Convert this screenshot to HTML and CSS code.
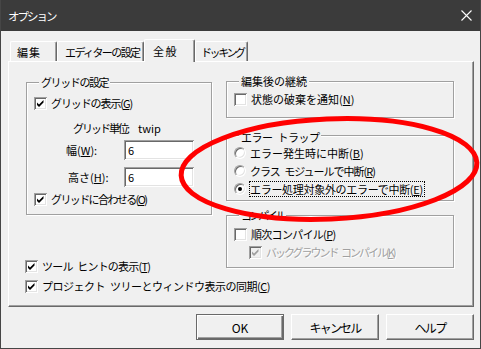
FILE: index.html
```html
<!DOCTYPE html>
<html lang="ja">
<head>
<meta charset="utf-8">
<link rel="stylesheet" href="styles.css">
</head>
<body>
<div class="window">
  <div class="titlebar">
    <span class="title">オプション</span>
    <svg class="close" width="11" height="11" viewBox="0 0 11 11"><path d="M0.5 0.5 L10.5 10.5 M10.5 0.5 L0.5 10.5" stroke="#fff" stroke-width="1.1" fill="none"/></svg>
  </div>
  <div class="tabs">
    <div class="tab t1">編集</div>
    <div class="tab t2">エディターの設定</div>
    <div class="tab t3 sel">全般</div>
    <div class="tab t4">ドッキング</div>
  </div>
  <div class="panel">
    <div class="col-left">
      <div class="grp grp-grid">
        <div class="grp-title ls-14">グリッドの設定</div>
        <div class="chk row-show"><span class="box"><svg viewBox="0 0 13 13"><polygon points="3,5.5 5,7.5 9.5,3 9.5,5.5 5,10 3,8"/></svg></span><span class="ls-11">グリッドの表示(<u>G</u>)</span></div>
        <div class="unit"><span><span class="ls-20">グリッド単位</span>:</span><span class="twip">twip</span></div>
        <div class="field f-w"><span class="lbl">幅(<u>W</u>):</span><span class="input">6</span></div>
        <div class="field f-h"><span class="lbl">高さ(<u>H</u>):</span><span class="input">6</span></div>
        <div class="chk row-snap"><span class="box"><svg viewBox="0 0 13 13"><polygon points="3,5.5 5,7.5 9.5,3 9.5,5.5 5,10 3,8"/></svg></span><span class="ls-16">グリッドに合わせる(<u>O</u>)</span></div>
      </div>
      <div class="chk row-tips"><span class="box"><svg viewBox="0 0 13 13"><polygon points="3,5.5 5,7.5 9.5,3 9.5,5.5 5,10 3,8"/></svg></span><span class="ls-08 ws">ツール ヒントの表示(<u>T</u>)</span></div>
      <div class="chk row-sync"><span class="box"><svg viewBox="0 0 13 13"><polygon points="3,5.5 5,7.5 9.5,3 9.5,5.5 5,10 3,8"/></svg></span><span class="ls-05 ws">プロジェクト ツリーとウィンドウ表示の同期(<u>C</u>)</span></div>
    </div>
    <div class="col-right">
      <div class="grp grp-edit">
        <div class="grp-title">編集後の継続</div>
        <div class="chk row-notify"><span class="box"></span><span>状態の破棄を通知(<u>N</u>)</span></div>
      </div>
      <div class="grp grp-trap">
        <div class="grp-title ls-05 ws">エラー トラップ</div>
        <div class="radio"><span class="dot"></span><span class="rlbl">エラー発生時に中断(<u>B</u>)</span></div>
        <div class="radio"><span class="dot"></span><span class="rlbl ls-10 ws">クラス モジュールで中断(<u>R</u>)</span></div>
        <div class="radio on"><span class="dot"></span><span class="rlbl focus ls-03">エラー処理対象外のエラーで中断(<u>E</u>)</span></div>
      </div>
      <div class="grp grp-compile">
        <div class="grp-title ls-24">コンパイル</div>
        <div class="chk row-demand"><span class="box"></span><span class="ls-07">順次コンパイル(<u>P</u>)</span></div>
        <div class="chk row-bg disabled"><span class="box"><svg viewBox="0 0 13 13"><polygon points="3,5.5 5,7.5 9.5,3 9.5,5.5 5,10 3,8"/></svg></span><span class="ls-20 ws">バックグラウンド コンパイル(<u>K</u>)</span></div>
      </div>
    </div>
  </div>
  <div class="buttons">
    <div class="btn default">OK</div>
    <div class="btn ls-18">キャンセル</div>
    <div class="btn ls-17">ヘルプ</div>
  </div>
  <svg class="mark" width="481" height="349" viewBox="0 0 481 349"><ellipse cx="329" cy="169" rx="148" ry="50" transform="rotate(-2.5 329 169)" fill="none" stroke="#ff0000" stroke-width="5"/></svg>
</div>
</body>
</html>
```

FILE: styles.css
```css
html, body {
  margin: 0;
  padding: 0;
  background: #f0f0f0;
}
body {
  font-family: "Noto Sans CJK JP", "Noto Sans", sans-serif;
  font-size: 11px;
  color: #000;
}
u { text-decoration: underline; text-underline-offset: 1px; }

.ls-03 { letter-spacing: -0.3px; }
.ls-05 { letter-spacing: -0.5px; }
.ls-07 { letter-spacing: -0.7px; }
.ls-08 { letter-spacing: -0.8px; }
.ls-10 { letter-spacing: -1px; }
.ls-11 { letter-spacing: -1.1px; }
.ls-14 { letter-spacing: -1.4px; }
.ls-16 { letter-spacing: -1.6px; }
.ls-17 { letter-spacing: -1.7px; }
.ls-18 { letter-spacing: -1.8px; }
.ls-20 { letter-spacing: -2px; }
.ls-24 { letter-spacing: -2.4px; }
.ws { word-spacing: 3px; }

.window {
  position: relative;
  width: 481px;
  height: 349px;
  box-sizing: border-box;
  border: 1px solid #464646;
  border-top: none;
  background: #f0f0f0;
  overflow: hidden;
}

.titlebar {
  height: 31px;
  background: #3b3b3b;
  display: flex;
  align-items: center;
  justify-content: space-between;
  padding: 0 9px 0 8px;
  margin: 0 -1px;
}
.title {
  color: #fff;
  font-size: 11.5px;
  line-height: 14px;
  letter-spacing: -2px;
}
.close { display: block; }

/* tabs */
.tabs {
  display: flex;
  align-items: flex-end;
  height: 22px;
  margin-top: 8px;
  padding-left: 9px;
}
.tab {
  box-sizing: border-box;
  height: 20px;
  display: flex;
  align-items: center;
  padding-left: 6px;
  background: #f0f0f0;
  border-top: 1px solid #fff;
  border-left: 1px solid #fff;
  border-right: 1px solid #696969;
  border-radius: 2px 2px 0 0;
  box-shadow: inset -1px 0 0 #a0a0a0;
  white-space: nowrap;
}
.t1 { width: 47px; letter-spacing: 1px; }
.t2 { width: 87px; padding-left: 7px; letter-spacing: -1.6px; }
.t3 { width: 51px; padding-left: 8px; letter-spacing: 1.5px; }
.t4 { width: 53px; padding-left: 5px; letter-spacing: -2.4px; }
.tab.sel {
  height: 23px;
  margin-bottom: -1px;
  position: relative;
  z-index: 1;
  padding-bottom: 1px;
}

/* panel */
.panel {
  box-sizing: border-box;
  height: 246px;
  margin: 0 6px 0 7px;
  border: 1px solid;
  border-color: #fff #696969 #696969 #fff;
  box-shadow: inset -1px -1px 0 #a0a0a0;
  display: flex;
  align-items: flex-start;
  gap: 14px;
  padding: 19px 0 0 17px;
}

.col-left {
  width: 186px;
  margin-top: 1px;
  display: flex;
  flex-direction: column;
}
.col-right {
  width: 228px;
  display: flex;
  flex-direction: column;
}

/* group boxes */
.grp {
  box-sizing: border-box;
  border: 1px solid #a0a0a0;
  box-shadow: 1px 1px 0 #fff, inset 1px 1px 0 #fff;
  display: flex;
  flex-direction: column;
  align-items: flex-start;
}
.grp-title {
  margin: -8px 0 0 5px;
  padding: 0 2px;
  height: 14px;
  line-height: 14px;
  background: #f0f0f0;
  white-space: nowrap;
}

.grp-grid { width: 186px; padding: 0 0 6px 7px; }
.grp-edit { padding: 0 0 9px 7px; }
.grp-trap { margin-top: 17px; padding: 2px 0 2px 7px; }
.grp-compile { margin-top: 14px; padding: 0 0 6px 7px; }

/* checkboxes */
.chk {
  height: 17px;
  display: flex;
  align-items: center;
  gap: 4px;
  white-space: nowrap;
  line-height: 17px;
}
.box {
  width: 13px;
  height: 13px;
  flex: none;
  background: #fff;
  box-shadow: inset 1px 1px 0 #a0a0a0, inset -1px -1px 0 #fff, inset 2px 2px 0 #696969, inset -2px -2px 0 #e3e3e3;
}
.box svg { display: block; width: 13px; height: 13px; }
.box polygon { fill: #000; }
.chk.disabled { color: #a0a0a0; text-shadow: 1px 1px 0 #fff; }
.chk.disabled .box { background: #f0f0f0; }
.chk.disabled .box polygon { fill: #a0a0a0; }

.row-show { margin-top: 6px; }
.unit {
  margin-top: 8px;
  height: 16px;
  line-height: 16px;
  padding-left: 39px;
  display: flex;
  gap: 8px;
}
.field {
  height: 20px;
  display: flex;
  align-items: center;
  width: 100%;
}
.f-w { margin-top: 4px; }
.f-h { margin-top: 7px; }
.f-w .lbl { margin-left: 32px; width: 58px; }
.f-h .lbl { margin-left: 34px; width: 56px; }
.input {
  box-sizing: border-box;
  width: 70px;
  height: 20px;
  background: #fff;
  padding-left: 4px;
  line-height: 20px;
  box-shadow: inset 1px 1px 0 #a0a0a0, inset -1px -1px 0 #fff, inset 2px 2px 0 #696969, inset -2px -2px 0 #e3e3e3;
}
.row-snap { margin-top: 4px; }

.row-tips { margin: 43px 0 0 -1px; }
.row-sync { margin: 3px 0 0 -1px; }

.row-notify { margin-top: 3px; }
.row-demand { margin-top: 4px; }
.row-bg { margin-top: 1px; padding-left: 15px; }

/* radios */
.radio {
  height: 18px;
  display: flex;
  align-items: center;
  white-space: nowrap;
}
.dot {
  box-sizing: border-box;
  width: 12px;
  height: 12px;
  flex: none;
  border-radius: 50%;
  background: #fff;
  border: 1px solid;
  border-color: #a0a0a0 #fff #fff #a0a0a0;
  box-shadow: inset 1px 1px 0 #696969, inset -1px -1px 0 #e3e3e3;
  display: flex;
  align-items: center;
  justify-content: center;
  margin-right: 3px;
}
.radio.on .dot::after {
  content: "";
  width: 4px;
  height: 4px;
  border-radius: 50%;
  background: #000;
}
.rlbl {
  border: 1px dotted transparent;
  padding: 0 1px 0 0;
  line-height: 14px;
}
.rlbl.focus { border-color: #000; }

/* buttons */
.buttons {
  display: flex;
  justify-content: flex-end;
  gap: 7px;
  margin-top: 7px;
  padding-right: 6px;
}
.btn {
  box-sizing: border-box;
  width: 88px;
  height: 26px;
  display: flex;
  align-items: center;
  justify-content: center;
  font-size: 12px;
  border: 1px solid;
  border-color: #fff #696969 #696969 #fff;
  box-shadow: inset -1px -1px 0 #a0a0a0;
}
.btn.default {
  border-color: #696969;
  box-shadow: inset 1px 1px 0 #fff, inset -1px -1px 0 #696969, inset -2px -2px 0 #a0a0a0;
}

.mark {
  position: absolute;
  left: -1px;
  top: 0;
  pointer-events: none;
}
```
